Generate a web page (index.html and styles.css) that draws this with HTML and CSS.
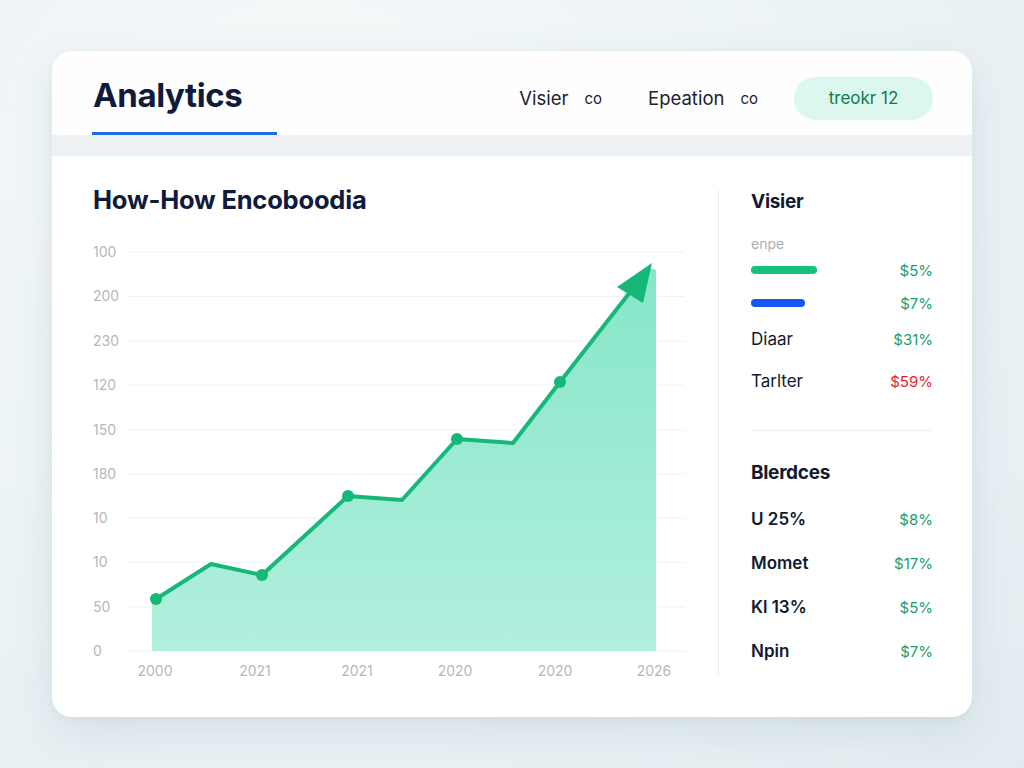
FILE: index.html
```html
<!DOCTYPE html>
<html lang="en">
<head>
    <meta charset="UTF-8">
    <meta name="viewport" content="width=device-width, initial-scale=1.0">
    <title>Analytics</title>
    <link rel="stylesheet" href="styles.css">
</head>
<body>
    <div class="card">
        <header class="topbar">
            <div class="tab">Analytics</div>
            <nav class="nav">
                <span class="nav-item">Visier</span>
                <span class="nav-small">co</span>
                <span class="nav-item nav-gap">Epeation</span>
                <span class="nav-small">co</span>
                <span class="pill">treokr 12</span>
            </nav>
        </header>
        <div class="band"></div>

        <main class="main">
            <section class="chart-panel">
                <h2 class="chart-title">How-How Encoboodia</h2>
                <svg class="chart" width="600" height="450" viewBox="90 238 600 450">
                    <defs>
                        <linearGradient id="areaFill" x1="0" y1="0" x2="0" y2="1">
                            <stop offset="0" stop-color="#86e6c8"/>
                            <stop offset="1" stop-color="#b2efdf"/>
                        </linearGradient>
                    </defs>

                    <!-- grid -->
                    <g class="grid">
                        <line x1="128" y1="252" x2="685" y2="252"/>
                        <line x1="128" y1="296.5" x2="685" y2="296.5"/>
                        <line x1="128" y1="341" x2="685" y2="341"/>
                        <line x1="128" y1="385" x2="685" y2="385"/>
                        <line x1="128" y1="430" x2="685" y2="430"/>
                        <line x1="128" y1="474" x2="685" y2="474"/>
                        <line x1="128" y1="518" x2="685" y2="518"/>
                        <line x1="128" y1="562.5" x2="685" y2="562.5"/>
                        <line x1="128" y1="607" x2="685" y2="607"/>
                        <line x1="128" y1="651" x2="685" y2="651"/>
                    </g>

                    <g class="axis-y">
                        <text x="93" y="257">100</text>
                        <text x="93" y="301">200</text>
                        <text x="93" y="346">230</text>
                        <text x="93" y="390">120</text>
                        <text x="93" y="435">150</text>
                        <text x="93" y="479">180</text>
                        <text x="93" y="523">10</text>
                        <text x="93" y="567">10</text>
                        <text x="93" y="612">50</text>
                        <text x="93" y="656">0</text>
                    </g>

                    <g class="axis-x">
                        <text x="155" y="676">2000</text>
                        <text x="255" y="676">2021</text>
                        <text x="357" y="676">2021</text>
                        <text x="455" y="676">2020</text>
                        <text x="555" y="676">2020</text>
                        <text x="654" y="676">2026</text>
                    </g>

                    <!-- area + trend line -->
                    <path class="area" d="M152 599 L156 599 L211 564 L262 575 L348 496 L402 500 L457 439 L513 443 L560 382 L650 268 L656 270 L656 651 L152 651 Z"/>
                    <polyline class="line" points="156,599 211,564 262,575 348,496 402,500 457,439 513,443 560,382 634,287"/>
                    <polygon class="arrow" points="652,263 617,287 643,303"/>

                    <g class="dots">
                        <circle cx="156" cy="599" r="6"/>
                        <circle cx="262" cy="575" r="6"/>
                        <circle cx="348" cy="496" r="6"/>
                        <circle cx="457" cy="439" r="6"/>
                        <circle cx="560" cy="382" r="6"/>
                    </g>
                </svg>
            </section>

            <div class="vline"></div>

            <aside class="side">
                <h3 class="side-title">Visier</h3>
                <div class="side-sub">enpe</div>
                <div class="bar-row">
                    <span class="bar bar-green"></span>
                    <span class="val">$5%</span>
                </div>
                <div class="bar-row bar-row-2">
                    <span class="bar bar-blue"></span>
                    <span class="val">$7%</span>
                </div>
                <div class="stat">
                    <span class="label">Diaar</span>
                    <span class="val">$31%</span>
                </div>
                <div class="stat stat-2">
                    <span class="label">Tarlter</span>
                    <span class="val down">$59%</span>
                </div>

                <hr class="divider">

                <h3 class="side-title side-title-2">Blerdces</h3>
                <div class="stat stat-lg first">
                    <span class="label strong">U 25%</span>
                    <span class="val">$8%</span>
                </div>
                <div class="stat stat-lg">
                    <span class="label strong">Momet</span>
                    <span class="val">$17%</span>
                </div>
                <div class="stat stat-lg">
                    <span class="label strong">Kl 13%</span>
                    <span class="val">$5%</span>
                </div>
                <div class="stat stat-lg">
                    <span class="label strong">Npin</span>
                    <span class="val">$7%</span>
                </div>
            </aside>
        </main>
    </div>
</body>
</html>
```

FILE: styles.css
```css
body {
    margin: 0;
    min-height: 768px;
    font-family: Inter, 'Liberation Sans', Arial, sans-serif;
    background: radial-gradient(ellipse at 30% 20%, #f5f9fa 0%, #e9f1f4 70%, #e2ecf0 100%);
    overflow: hidden;
}
.card {
    margin: 51px 0 0 52px;
    width: 920px;
    height: 666px;
    background: #fff;
    border-radius: 20px;
    box-shadow: 0 14px 40px rgba(90, 120, 140, 0.14), 0 2px 6px rgba(90, 120, 140, 0.06);
    overflow: hidden;
}
.topbar {
    height: 84px;
    display: flex;
    padding: 0 39px 0 40px;
    background: #fefefe;
}
.tab {
    width: 185px;
    display: flex;
    align-items: center;
    padding: 7px 0 0 1px;
    box-sizing: border-box;
    font-size: 33px;
    font-weight: 700;
    letter-spacing: -0.4px;
    color: #101a3a;
    border-bottom: 3px solid #1f6de0;
}
.nav {
    margin-left: auto;
    display: flex;
    align-items: center;
    padding-top: 10px;
}
.nav-item {
    font-size: 18.5px;
    color: #1b2232;
}
.nav-small {
    font-size: 15px;
    color: #1b2232;
    margin-left: 16px;
}
.nav-gap {
    margin-left: 46px;
}
.pill {
    margin-left: 36px;
    width: 139px;
    height: 43px;
    border-radius: 22px;
    background: #dcf7ee;
    color: #127a50;
    font-size: 17px;
    display: flex;
    align-items: center;
    justify-content: center;
}
.band {
    height: 21px;
    background: #eef2f4;
}
.main {
    display: flex;
    height: 561px;
}
.chart-panel {
    width: 666px;
    padding: 28px 0 0 41px;
    box-sizing: border-box;
}
.chart-title {
    margin: 0;
    font-size: 25.5px;
    line-height: 32px;
    font-weight: 700;
    color: #101a3a;
    letter-spacing: -0.2px;
}
.chart {
    display: block;
    margin: 22px 0 0 -3px;
}
.grid line {
    stroke: #f0f2f4;
    stroke-width: 1;
}
.axis-y text,
.axis-x text {
    font-family: Inter, 'Liberation Sans', Arial, sans-serif;
    font-size: 14px;
    fill: #b4b8be;
}
.axis-x text {
    text-anchor: middle;
}
.area {
    fill: url(#areaFill);
}
.line {
    fill: none;
    stroke: #16b878;
    stroke-width: 4;
    stroke-linejoin: round;
}
.arrow,
.dots circle {
    fill: #16b878;
}
.vline {
    width: 1px;
    margin: 34px 0 42px;
    background: #e9ecef;
}
.side {
    flex: 1;
    padding: 24px 39px 0 32px;
}
.side-title {
    margin: 0;
    height: 42px;
    display: flex;
    align-items: center;
    font-size: 19px;
    font-weight: 700;
    letter-spacing: -0.3px;
    color: #111a30;
}
.side-sub {
    height: 42px;
    display: flex;
    align-items: center;
    font-size: 14px;
    color: #a9aeb4;
}
.bar-row {
    height: 12px;
    display: flex;
    align-items: center;
    justify-content: space-between;
}
.bar-row-2 {
    margin-top: 21px;
}
.bar {
    height: 8px;
    border-radius: 4px;
}
.bar-green {
    width: 66px;
    background: #19c27b;
}
.bar-blue {
    width: 54px;
    background: #1358f0;
}
.stat {
    height: 36px;
    margin-top: 12px;
    display: flex;
    align-items: center;
    justify-content: space-between;
}
.stat-2 {
    margin-top: 6px;
}
.label {
    font-size: 17px;
    color: #111a2e;
}
.strong {
    font-size: 17px;
    font-weight: 600;
}
.val {
    font-size: 15px;
    color: #1b9e6c;
}
.down {
    color: #e1262b;
}
.divider {
    margin: 31px 2px 0 0;
    border: 0;
    height: 1px;
    background: #eceff1;
}
.side-title-2 {
    margin-top: 20px;
}
.stat-lg {
    height: 44px;
    margin-top: 0;
}
.stat-lg.first {
    margin-top: 4px;
}
```
